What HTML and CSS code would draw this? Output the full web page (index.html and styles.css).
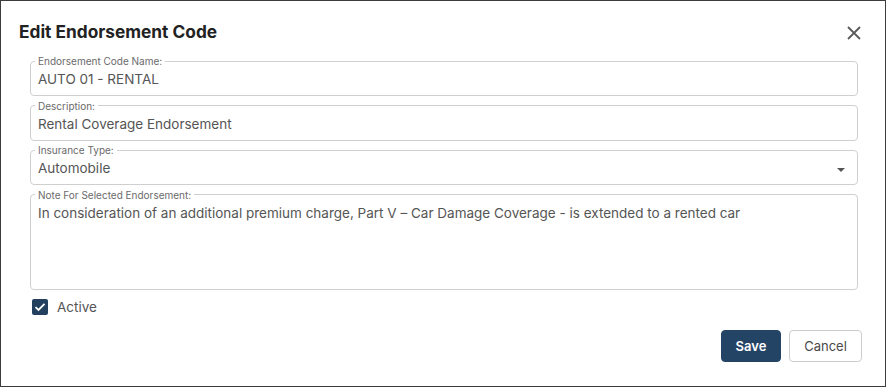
FILE: index.html
```html
<!DOCTYPE html>
<html>
<head>
<meta charset="utf-8">
<link rel="stylesheet" href="styles.css">
</head>
<body>
<div class="dialog">
  <div class="header">
    <h1 class="title">Edit Endorsement Code</h1>
    <svg class="close" width="14" height="14" viewBox="0 0 14 14"><path d="M1 1L13 13M13 1L1 13" stroke="#5a5a5a" stroke-width="1.8" fill="none"/></svg>
  </div>
  <div class="form">
    <fieldset class="field">
      <legend class="label">Endorsement Code Name:</legend>
      <div class="value">AUTO 01 - RENTAL</div>
    </fieldset>
    <fieldset class="field">
      <legend class="label">Description:</legend>
      <div class="value">Rental Coverage Endorsement</div>
    </fieldset>
    <fieldset class="field select">
      <legend class="label">Insurance Type:</legend>
      <div class="value">Automobile</div>
      <span class="caret"></span>
    </fieldset>
    <fieldset class="field area">
      <legend class="label">Note For Selected Endorsement:</legend>
      <div class="value">In consideration of an additional premium charge, Part V – Car Damage Coverage - is extended to a rented car</div>
    </fieldset>
    <label class="check">
      <span class="box"><svg width="12" height="10" viewBox="0 0 12 10"><path d="M1.5 5.2L4.5 8L10.5 1.8" stroke="#fff" stroke-width="1.8" fill="none"/></svg></span>
      <span class="check-text">Active</span>
    </label>
  </div>
  <div class="actions">
    <button class="btn primary">Save</button>
    <button class="btn secondary">Cancel</button>
  </div>
</div>
</body>
</html>
```
FILE: styles.css
```css
html, body {
  margin: 0;
  padding: 0;
  background: #fff;
}
body {
  font-family: Inter, "Liberation Sans", sans-serif;
}
.dialog {
  width: 886px;
  height: 387px;
  box-sizing: border-box;
  border: 1px solid #3c3c3c;
  background: #fff;
  display: flex;
  flex-direction: column;
}
.header {
  display: flex;
  justify-content: space-between;
  align-items: flex-start;
  padding: 19px 24px 0 18px;
}
.title {
  margin: 0;
  font-size: 17.3px;
  line-height: 24px;
  font-weight: 700;
  color: #222;
}
.close {
  margin-top: 6px;
}
.form {
  display: flex;
  flex-direction: column;
  gap: 3.5px;
  padding: 11px 27px 0 29px;
}
.field {
  margin: 0;
  border: 1px solid #cfcfcf;
  border-radius: 4px;
  padding: 2px 8px 6px 4px;
  min-width: 0;
  position: relative;
}
.label {
  padding: 0 3px;
  font-size: 10px;
  line-height: 12px;
  color: #6a6a6a;
}
.value {
  font-size: 13.5px;
  line-height: 20px;
  color: #555;
  padding-left: 3px;
}
.area .value {
  height: 80px;
}
.caret {
  position: absolute;
  right: 12px;
  top: 12px;
  width: 0;
  height: 0;
  border-left: 4px solid transparent;
  border-right: 4px solid transparent;
  border-top: 4px solid #555;
}
.check {
  display: flex;
  align-items: center;
  gap: 9px;
  margin-top: 4px;
  padding-left: 2px;
}
.box {
  width: 16px;
  height: 16px;
  border-radius: 2px;
  background: #23415f;
  display: flex;
  align-items: center;
  justify-content: center;
}
.check-text {
  font-size: 13.5px;
  line-height: 20px;
  color: #555;
}
.actions {
  display: flex;
  justify-content: flex-end;
  gap: 8px;
  padding: 13px 23px 0 0;
}
.btn {
  height: 32px;
  border-radius: 4px;
  font-family: Inter, "Liberation Sans", sans-serif;
  font-size: 13px;
  padding: 0;
  cursor: pointer;
}
.primary {
  width: 60px;
  background: #244466;
  border: 1px solid #244466;
  color: #fff;
  font-weight: 600;
}
.secondary {
  width: 73px;
  background: #fff;
  border: 1px solid #cccccc;
  color: #4a4a4a;
}
```
